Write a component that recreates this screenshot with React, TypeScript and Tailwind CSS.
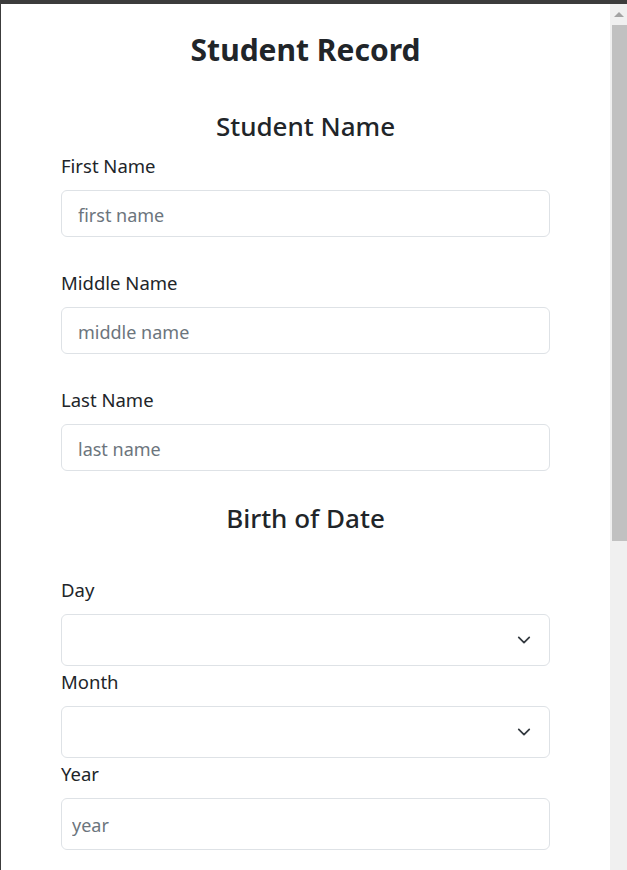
import { FC } from "react";

const Chevron: FC = () => (
  <svg width="14" height="14" viewBox="0 0 16 16" className="text-[#343a40]">
    <path d="M2 5l6 6 6-6" fill="none" stroke="currentColor" strokeWidth="2" strokeLinecap="round" strokeLinejoin="round" />
  </svg>
);

const TextField: FC<{ label: string; placeholder: string; first?: boolean }> = ({ label, placeholder, first }) => (
  <div className={first ? "" : "mt-[34px]"}>
    <label className="block text-[18.5px] leading-6 mb-3">{label}</label>
    <input
      placeholder={placeholder}
      className="w-full h-[47px] px-4 pt-[2px] text-[18px] border border-[#dee2e6] rounded-md outline-none placeholder:text-[#6c757d]"
    />
  </div>
);

const SelectField: FC<{ label: string; className?: string }> = ({ label, className }) => (
  <div className={className}>
    <label className="block text-[18.5px] leading-6 mb-3">{label}</label>
    <div className="h-[52px] border border-[#dee2e6] rounded-md flex items-center justify-end pr-[18px]">
      <Chevron />
    </div>
  </div>
);

const App: FC = () => {
  return (
    <div className="h-[870px] flex flex-col bg-[#3c3c3c] overflow-hidden text-[#212529] font-['Noto_Sans',sans-serif]">
      {/* top bar */}
      <div className="h-[4px]" />
      <div className="flex flex-1 min-h-0">
        <div className="w-[1px]" />
        {/* page */}
        <main className="flex-1 bg-white pt-[26px]">
          <div className="w-[489px] mx-auto">
            <h1 className="text-center text-[30px] leading-10 font-bold">Student Record</h1>

            <h2 className="text-center text-[26px] leading-8 font-medium mt-10 mb-3">Student Name</h2>
            <TextField label="First Name" placeholder="first name" first />
            <TextField label="Middle Name" placeholder="middle name" />
            <TextField label="Last Name" placeholder="last name" />

            <h2 className="text-center text-[26px] leading-8 font-medium mt-[31px] mb-[44px]">Birth of Date</h2>
            <SelectField label="Day" />
            <SelectField label="Month" className="mt-1" />
            <div className="mt-1">
              <label className="block text-[18.5px] leading-6 mb-3">Year</label>
              <input
                placeholder="year"
                className="w-full h-[52px] px-[10px] pt-[2px] text-[18px] border border-[#dee2e6] rounded-md outline-none placeholder:text-[#6c757d]"
              />
            </div>
          </div>
        </main>
        {/* scrollbar */}
        <div className="w-[17px] bg-[#f0f0f0] flex flex-col">
          <div className="h-[21px] flex items-center justify-center">
            <div className="w-0 h-0 border-l-[5px] border-r-[5px] border-b-[5px] border-l-transparent border-r-transparent border-b-[#a3a3a3]" />
          </div>
          <div className="h-[516px] ml-[2px] bg-[#c1c1c1]" />
        </div>
      </div>
    </div>
  );
};

export default App;
